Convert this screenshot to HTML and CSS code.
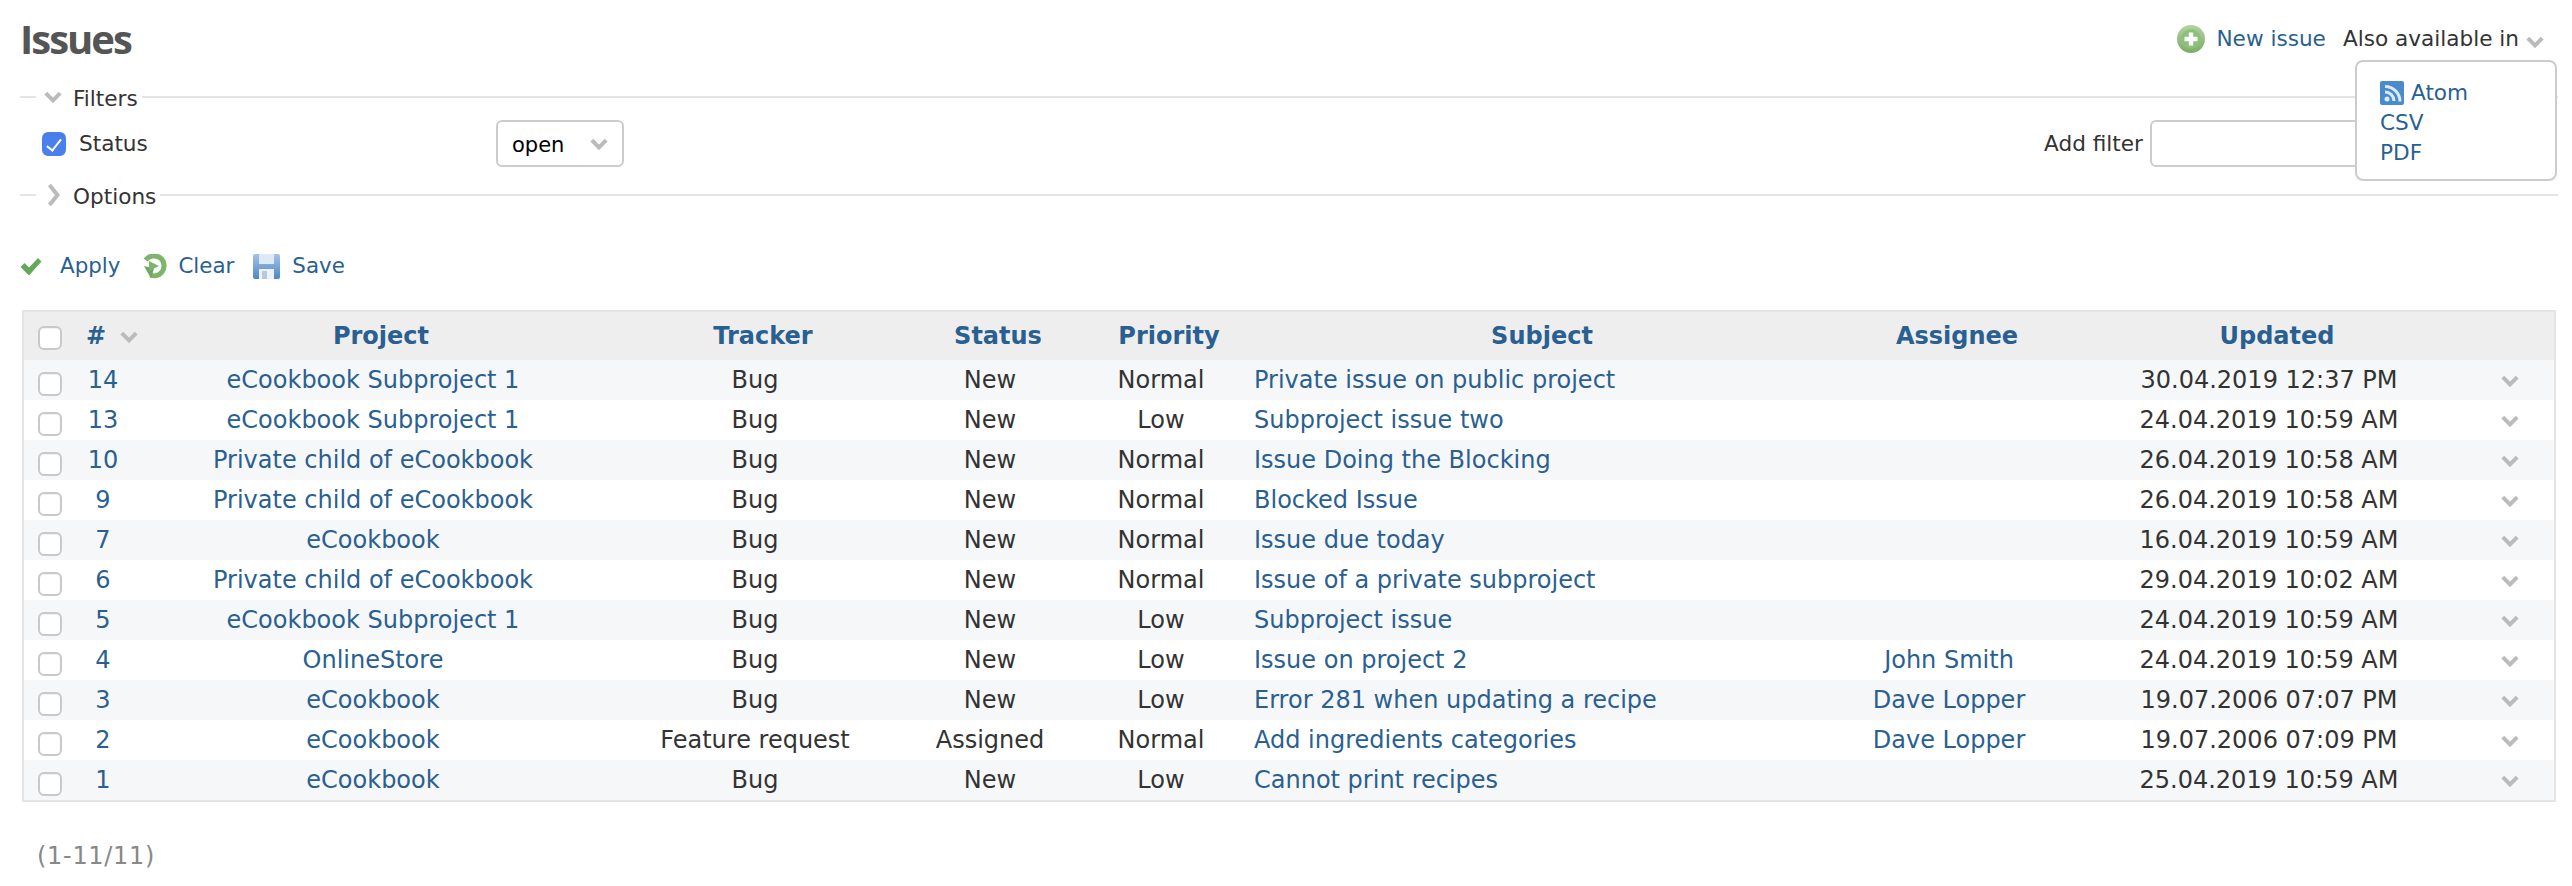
FILE: index.html
```html
<!DOCTYPE html>
<html lang="en">
<head>
<meta charset="utf-8">
<title>Issues</title>
<link rel="stylesheet" href="styles.css">
</head>
<body>
<svg class="defs" aria-hidden="true">
  <defs>
    <linearGradient id="gGreen" x1="0" y1="0" x2="0" y2="1"><stop offset="0" stop-color="#b3d3a0"/><stop offset="1" stop-color="#7cab68"/></linearGradient>
    <linearGradient id="gBlue" x1="0" y1="0" x2="0" y2="1"><stop offset="0" stop-color="#a6c3e8"/><stop offset="1" stop-color="#4d86c8"/></linearGradient>
    <symbol id="chev" viewBox="0 0 18 12"><path d="M1.800 2.200 9 9.400 16.200 2.200" fill="none" stroke="#bbb" stroke-width="4"/></symbol>
    <symbol id="chevr" viewBox="0 0 13 24"><path d="M2.500 2 10.500 12 2.500 22" fill="none" stroke="#bbb" stroke-width="4"/></symbol>
  </defs>
</svg>
<main class="page">
  <header class="header">
    <h2 class="title">Issues</h2>
    <div class="contextual">
      <a class="link new-issue" href="#">
        <svg class="icon-new" viewBox="0 0 28 28"><circle cx="14" cy="14" r="14" fill="url(#gGreen)"/><circle cx="14" cy="14" r="10" fill="#8dc07a"/><path d="M14 7.500v13M7.500 14h13" stroke="#fff" stroke-width="4.400"/></svg>
        New issue
      </a>
      <span class="also">Also available in</span>
      <svg class="chev-also"><use href="#chev"/></svg>
    </div>
    <div class="dropdown">
      <a class="link atom" href="#">
        <svg class="icon-rss" viewBox="0 0 24 24"><rect width="24" height="24" rx="2" fill="#4a8bcb"/><circle cx="7" cy="18" r="2.500" fill="#dce9f6"/><path d="M5 11a9 9 0 0 1 9 9M5 5.500a15 15 0 0 1 15 15" fill="none" stroke="#dce9f6" stroke-width="3"/></svg>
        Atom
      </a>
      <a class="link" href="#">CSV</a>
      <a class="link" href="#">PDF</a>
    </div>
  </header>

  <div class="group-title">
    <svg class="chev-group"><use href="#chev"/></svg>
    <span class="group-text">Filters</span>
  </div>
  <div class="filter-row">
    <label class="status-label"><input class="check checked" type="checkbox" checked>Status</label>
    <div class="select-wrap">
      <select class="select"><option>open</option></select>
      <svg class="chev-select"><use href="#chev"/></svg>
    </div>
    <label class="add-filter">Add filter<input class="add-input" type="text"></label>
  </div>
  <div class="group-title options">
    <svg class="chev-right"><use href="#chevr"/></svg>
    <span class="group-text">Options</span>
  </div>

  <div class="actions">
    <a class="link action" href="#">
      <svg class="icon-apply" viewBox="0 0 22 19"><path d="M0.500 10 4.500 6 9 10.500 18 1 21.500 4.500 9 18.500Z" fill="#66a85a"/></svg>
      Apply
    </a>
    <a class="link action" href="#">
      <svg class="icon-clear" viewBox="0 0 26 25"><path d="M4.500 6C8 1.500 15 .5 19.500 4c4.500 3.500 4.500 10.500 1 14.500-3 3.500-7.500 4-11 2.500" fill="none" stroke="#7db56b" stroke-width="5"/><path d="M13 14.500 3 12 10 24.500Z" fill="#6fa85f"/><path d="M8 7 18 12 8 17Z" fill="#7db56b"/></svg>
      Clear
    </a>
    <a class="link action" href="#">
      <svg class="icon-save" viewBox="0 0 27 25"><rect width="27" height="25" rx="2" fill="url(#gBlue)"/><rect x="6" width="15" height="10" fill="#dfe9f5"/><rect x="6" y="15" width="15" height="10" fill="#eef1f5"/><rect x="9" y="17" width="5" height="8" fill="#b9c8da"/></svg>
      Save
    </a>
  </div>

  <table class="issues">
    <colgroup>
      <col class="c-check"><col class="c-id"><col class="c-project"><col class="c-tracker"><col class="c-status"><col class="c-priority"><col class="c-subject"><col class="c-assignee"><col class="c-updated"><col class="c-menu">
    </colgroup>
    <thead>
      <tr>
        <th><input class="check head-check" type="checkbox"></th>
        <th class="th-id"><a class="sort-id" href="#">#</a><svg class="chev-sort"><use href="#chev"/></svg></th>
        <th><a class="sort" href="#">Project</a></th>
        <th><a class="sort" href="#">Tracker</a></th>
        <th><a class="sort" href="#">Status</a></th>
        <th><a class="sort" href="#">Priority</a></th>
        <th><a class="sort" href="#">Subject</a></th>
        <th><a class="sort" href="#">Assignee</a></th>
        <th><a class="sort" href="#">Updated</a></th>
        <th></th>
      </tr>
    </thead>
    <tbody>
      <tr><td><input class="check" type="checkbox"></td><td><a class="link" href="#">14</a></td><td><a class="link" href="#">eCookbook Subproject 1</a></td><td>Bug</td><td>New</td><td>Normal</td><td class="subject"><a class="link" href="#">Private issue on public project</a></td><td></td><td>30.04.2019 12:37 PM</td><td><svg class="chev-row"><use href="#chev"/></svg></td></tr>
      <tr><td><input class="check" type="checkbox"></td><td><a class="link" href="#">13</a></td><td><a class="link" href="#">eCookbook Subproject 1</a></td><td>Bug</td><td>New</td><td>Low</td><td class="subject"><a class="link" href="#">Subproject issue two</a></td><td></td><td>24.04.2019 10:59 AM</td><td><svg class="chev-row"><use href="#chev"/></svg></td></tr>
      <tr><td><input class="check" type="checkbox"></td><td><a class="link" href="#">10</a></td><td><a class="link" href="#">Private child of eCookbook</a></td><td>Bug</td><td>New</td><td>Normal</td><td class="subject"><a class="link" href="#">Issue Doing the Blocking</a></td><td></td><td>26.04.2019 10:58 AM</td><td><svg class="chev-row"><use href="#chev"/></svg></td></tr>
      <tr><td><input class="check" type="checkbox"></td><td><a class="link" href="#">9</a></td><td><a class="link" href="#">Private child of eCookbook</a></td><td>Bug</td><td>New</td><td>Normal</td><td class="subject"><a class="link" href="#">Blocked Issue</a></td><td></td><td>26.04.2019 10:58 AM</td><td><svg class="chev-row"><use href="#chev"/></svg></td></tr>
      <tr><td><input class="check" type="checkbox"></td><td><a class="link" href="#">7</a></td><td><a class="link" href="#">eCookbook</a></td><td>Bug</td><td>New</td><td>Normal</td><td class="subject"><a class="link" href="#">Issue due today</a></td><td></td><td>16.04.2019 10:59 AM</td><td><svg class="chev-row"><use href="#chev"/></svg></td></tr>
      <tr><td><input class="check" type="checkbox"></td><td><a class="link" href="#">6</a></td><td><a class="link" href="#">Private child of eCookbook</a></td><td>Bug</td><td>New</td><td>Normal</td><td class="subject"><a class="link" href="#">Issue of a private subproject</a></td><td></td><td>29.04.2019 10:02 AM</td><td><svg class="chev-row"><use href="#chev"/></svg></td></tr>
      <tr><td><input class="check" type="checkbox"></td><td><a class="link" href="#">5</a></td><td><a class="link" href="#">eCookbook Subproject 1</a></td><td>Bug</td><td>New</td><td>Low</td><td class="subject"><a class="link" href="#">Subproject issue</a></td><td></td><td>24.04.2019 10:59 AM</td><td><svg class="chev-row"><use href="#chev"/></svg></td></tr>
      <tr><td><input class="check" type="checkbox"></td><td><a class="link" href="#">4</a></td><td><a class="link" href="#">OnlineStore</a></td><td>Bug</td><td>New</td><td>Low</td><td class="subject"><a class="link" href="#">Issue on project 2</a></td><td><a class="link" href="#">John Smith</a></td><td>24.04.2019 10:59 AM</td><td><svg class="chev-row"><use href="#chev"/></svg></td></tr>
      <tr><td><input class="check" type="checkbox"></td><td><a class="link" href="#">3</a></td><td><a class="link" href="#">eCookbook</a></td><td>Bug</td><td>New</td><td>Low</td><td class="subject"><a class="link" href="#">Error 281 when updating a recipe</a></td><td><a class="link" href="#">Dave Lopper</a></td><td>19.07.2006 07:07 PM</td><td><svg class="chev-row"><use href="#chev"/></svg></td></tr>
      <tr><td><input class="check" type="checkbox"></td><td><a class="link" href="#">2</a></td><td><a class="link" href="#">eCookbook</a></td><td>Feature request</td><td>Assigned</td><td>Normal</td><td class="subject"><a class="link" href="#">Add ingredients categories</a></td><td><a class="link" href="#">Dave Lopper</a></td><td>19.07.2006 07:09 PM</td><td><svg class="chev-row"><use href="#chev"/></svg></td></tr>
      <tr><td><input class="check" type="checkbox"></td><td><a class="link" href="#">1</a></td><td><a class="link" href="#">eCookbook</a></td><td>Bug</td><td>New</td><td>Low</td><td class="subject"><a class="link" href="#">Cannot print recipes</a></td><td></td><td>25.04.2019 10:59 AM</td><td><svg class="chev-row"><use href="#chev"/></svg></td></tr>
    </tbody>
  </table>

  <p class="pagination">(1-11/11)</p>
</main>
</body>
</html>
```
FILE: styles.css
```css
* { box-sizing: border-box; }
html, body { margin: 0; padding: 0; background: #fff; }
body {
  font-family: "DejaVu Sans", Verdana, sans-serif;
  font-size: 24px;
  line-height: 30px;
  color: #333;
}
.defs { position: absolute; width: 0; height: 0; }
svg { display: block; flex: none; }
a { text-decoration: none; }
.link { color: #2a5f92; }

.page { padding: 0 14px 0 20px; }

.header {
  position: relative;
  height: 82px;
  display: flex;
  justify-content: space-between;
  align-items: flex-start;
  font-size: 21.6px;
}
.title {
  margin: 0;
  padding-top: 12px;
  font-family: "Open Sans", sans-serif;
  font-size: 40px;
  font-weight: 700;
  letter-spacing: -2px;
  line-height: 54px;
  color: #555;
}
.contextual {
  display: flex;
  align-items: center;
  height: 30px;
  margin-top: 24px;
  padding-right: 14px;
}
.new-issue { display: flex; align-items: center; gap: 11px; margin-right: 17px; }
.icon-new { width: 28px; height: 28px; }
.chev-also { width: 18px; height: 12px; margin-left: 7px; margin-top: 5px; }

.dropdown {
  position: absolute;
  top: 60px;
  right: 1px;
  width: 202px;
  height: 121px;
  padding: 16px 0 0 23px;
  display: flex;
  flex-direction: column;
  background: #fff;
  border: 2px solid #ccc;
  border-radius: 8px;
  z-index: 2;
}
.atom { display: flex; align-items: center; gap: 7px; }
.icon-rss { width: 24px; height: 24px; }

.group-title {
  height: 30px;
  display: flex;
  align-items: center;
  color: #333;
  font-size: 21.6px;
}
.group-title::before { content: ""; width: 16px; height: 2px; background: #e4e4e4; margin-right: 8px; }
.group-title::after { content: ""; flex: 1; height: 2px; background: #e4e4e4; margin-left: 4px; }
.group-text { padding-top: 3px; }
.chev-group { width: 18px; height: 12px; margin-right: 11px; }
.chev-right { width: 13px; height: 24px; margin: 0 13px 0 3px; }

.filter-row { display: flex; align-items: flex-start; height: 68px; padding-top: 8px; font-size: 21.6px; }
.status-label { width: 476px; display: flex; align-items: center; height: 47px; padding-left: 22px; gap: 13px; }

.check {
  appearance: none;
  -webkit-appearance: none;
  display: block;
  width: 24px;
  height: 24px;
  margin: 8px 0 0 14px;
  background: #fff;
  border: 2px solid #c9c9c9;
  border-radius: 6px;
  box-shadow: inset 0 1px 1px rgba(0, 0, 0, .06);
}
.head-check { margin-top: 4px; }
.check.checked {
  position: relative;
  flex: none;
  margin: 0;
  background: #4a80ee;
  border-color: #4a80ee;
}
.check.checked::after {
  content: "";
  position: absolute;
  left: 6px;
  top: 2px;
  width: 6px;
  height: 13px;
  border: solid #fff;
  border-width: 0 2px 2px 0;
  transform: rotate(38deg);
}

.select-wrap { position: relative; width: 128px; height: 47px; }
.select {
  appearance: none;
  -webkit-appearance: none;
  width: 128px;
  height: 47px;
  padding: 2px 0 0 14px;
  font-family: "DejaVu Sans", Verdana, sans-serif;
  font-size: 21px;
  color: #000;
  background: #fff;
  border: 2px solid #ccc;
  border-radius: 6px;
}
.chev-select { position: absolute; top: 18px; left: 94px; width: 18px; height: 12px; }
.add-filter { margin-left: auto; display: flex; align-items: center; gap: 7px; margin-right: 158px; height: 47px; }
.add-input {
  width: 250px;
  height: 47px;
  background: #fff;
  border: 2px solid #ccc;
  border-radius: 6px;
}

.actions { display: flex; align-items: center; height: 32px; margin-top: 40px; font-size: 21.4px; }
.action { display: flex; align-items: center; }
.icon-apply { width: 22px; height: 19px; margin-right: 18px; }
.icon-clear { width: 26px; height: 25px; margin: 0 11px 0 21px; }
.icon-save { width: 27px; height: 25px; margin: 0 12px 0 19px; }

.issues {
  table-layout: fixed;
  border-collapse: separate;
  border-spacing: 0;
  width: 2534px;
  margin: 28px 0 0 2px;
  border: 2px solid #e4e4e4;
}
.c-check { width: 46px; }
.c-id { width: 66px; }
.c-project { width: 474px; }
.c-tracker { width: 290px; }
.c-status { width: 180px; }
.c-priority { width: 162px; }
.c-subject { width: 584px; }
.c-assignee { width: 246px; }
.c-updated { width: 394px; }
.c-menu { width: 88px; }

.issues th {
  height: 48px;
  padding: 0;
  text-align: center;
  background: #eee;
  font-weight: bold;
  font-size: 24px;
}
.issues th a { color: #2a5f92; }
.sort { padding-left: 16px; }
.th-id { position: relative; }
.sort-id { display: block; text-align: left; padding-left: 16px; }
.chev-sort { position: absolute; left: 50px; top: 19px; width: 18px; height: 12px; }
.issues td {
  height: 40px;
  padding: 0;
  text-align: center;
  white-space: nowrap;
}
.issues td.subject { text-align: left; padding-left: 12px; }
.issues tbody tr:nth-child(odd) td { background: #f6f7f9; }
.chev-row { width: 18px; height: 12px; margin: 2px auto 0; }

.pagination { margin: 39px 0 0 17px; color: #888; letter-spacing: 0.7px; }
```
